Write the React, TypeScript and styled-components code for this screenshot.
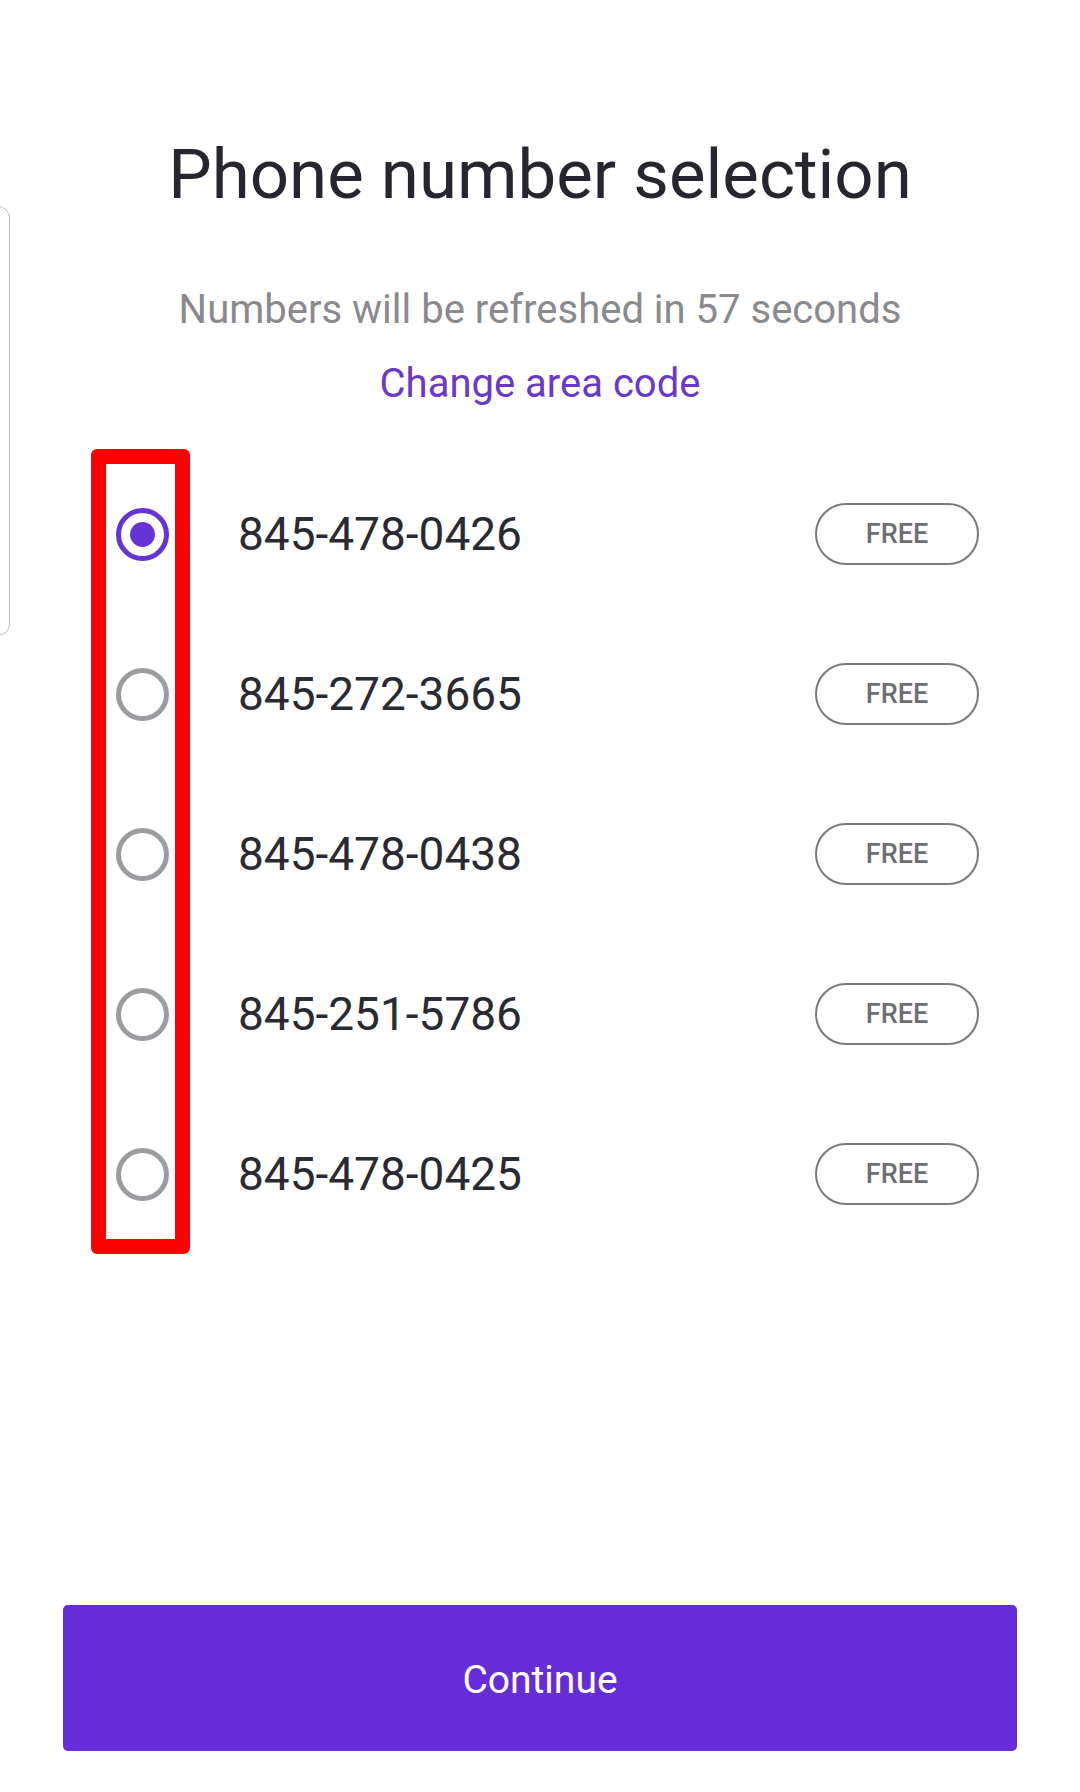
import styled, { createGlobalStyle } from 'styled-components'

const GlobalStyle = createGlobalStyle`
  html, body {
    margin: 0;
    padding: 0;
    background: #ffffff;
  }
  body {
    font-family: Roboto, "Liberation Sans", sans-serif;
  }
`

const Page = styled.div`
  position: relative;
  width: 1080px;
  height: 1792px;
  box-sizing: border-box;
  padding: 135px 0 41px;
  display: flex;
  flex-direction: column;
  align-items: center;
  overflow: hidden;
`

// panel edge peeking in from the left side
const SideEdge = styled.div`
  position: absolute;
  left: -40px;
  top: 206px;
  width: 48px;
  height: 428px;
  border: 1.5px solid #bdbdbd;
  border-radius: 12px;
`

const Title = styled.h1`
  margin: 0;
  font-size: 69px;
  line-height: 80px;
  font-weight: 400;
  color: #262630;
  text-align: center;
`

const Subtitle = styled.p`
  margin: 71px 0 0;
  font-size: 40px;
  line-height: 48px;
  color: #8a8a8e;
  text-align: center;
`

const AreaLink = styled.a`
  margin-top: 26px;
  font-size: 40px;
  line-height: 48px;
  color: #6a38cc;
  text-decoration: none;
  cursor: pointer;
`

const List = styled.div`
  position: relative;
  align-self: stretch;
  margin-top: 46px;
  display: flex;
  flex-direction: column;
`

const Row = styled.label`
  height: 160px;
  display: flex;
  align-items: center;
  padding: 0 101px 0 116px;
  cursor: pointer;
`

const Radio = styled.span<{ $checked: boolean }>`
  box-sizing: border-box;
  width: 53px;
  height: 53px;
  flex: none;
  border-radius: 50%;
  border: 5px solid ${p => (p.$checked ? '#6633d6' : '#9c9ca0')};
  display: flex;
  align-items: center;
  justify-content: center;

  &::after {
    content: '';
    width: 25px;
    height: 25px;
    border-radius: 50%;
    background: #6633d6;
    display: ${p => (p.$checked ? 'block' : 'none')};
  }
`

const Number = styled.span`
  flex: 1;
  margin-left: 69px;
  font-size: 46px;
  color: #2a2a32;
`

const FreePill = styled.span`
  box-sizing: border-box;
  width: 164px;
  height: 62px;
  border: 2.5px solid #7a7a7e;
  border-radius: 31px;
  display: flex;
  align-items: center;
  justify-content: center;
  font-size: 27px;
  font-weight: 500;
  color: #6e6e73;
`

// red annotation frame over the radio column
const Highlight = styled.div`
  position: absolute;
  left: 91px;
  top: -5px;
  width: 99px;
  height: 805px;
  box-sizing: border-box;
  border: 15px solid #ff0000;
  border-radius: 6px;
  pointer-events: none;
`

const ContinueButton = styled.button`
  margin-top: auto;
  width: 954px;
  height: 146px;
  padding-top: 4px;
  border: none;
  border-radius: 5px;
  background: #652cd8;
  color: #ffffff;
  font-family: Roboto, "Liberation Sans", sans-serif;
  font-size: 39px;
  cursor: pointer;
`

const numbers = ['845-478-0426', '845-272-3665', '845-478-0438', '845-251-5786', '845-478-0425']

export default function App() {
  const selected = 0
  return (
    <>
      <GlobalStyle />
      <Page>
        <SideEdge />
        <Title>Phone number selection</Title>
        <Subtitle>Numbers will be refreshed in 57 seconds</Subtitle>
        <AreaLink>Change area code</AreaLink>
        <List>
          {numbers.map((n, i) => (
            <Row key={n}>
              <Radio $checked={i === selected} />
              <Number>{n}</Number>
              <FreePill>FREE</FreePill>
            </Row>
          ))}
          <Highlight />
        </List>
        <ContinueButton>Continue</ContinueButton>
      </Page>
    </>
  )
}
